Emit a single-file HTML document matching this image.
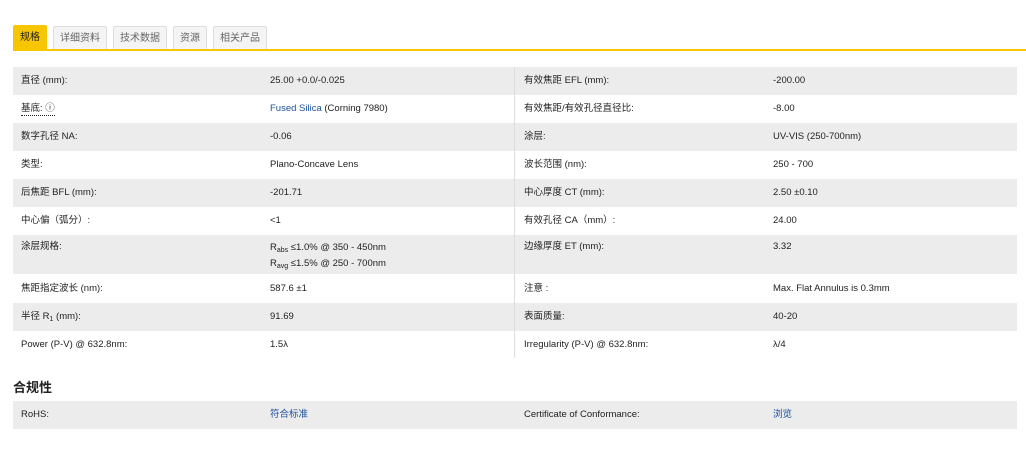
<!DOCTYPE html>
<html><head><meta charset="utf-8"><style>
body{margin:0;width:1026px;height:450px;background:#fff;font-family:"Liberation Sans","Noto Sans CJK SC",sans-serif;color:#222;font-size:9.5px;position:relative;overflow:hidden}
.tabs{position:absolute;left:13px;top:25px;height:25px}
.tab{position:absolute;top:1px;height:23px;border:1px solid #ddd;border-bottom:none;background:#f4f4f4;color:#666;font-size:10px;line-height:24px;text-align:center;border-radius:2px 2px 0 0;box-sizing:border-box}
.tab.a{background:#f7c600;border-color:#f7c600;color:#222;top:0;height:25px}
.line{position:absolute;left:13px;right:0;top:49px;height:2px;background:#f7c600}
.row{position:absolute;left:13px;width:1004px;height:28px}
.g{background:#ececec}
.c{position:absolute;top:0;line-height:28px;white-space:nowrap}
.l1{left:8px}.v1{left:257px}.l2{left:511px}.v2{left:760px}
.div{position:absolute;left:514px;top:67px;width:1px;height:291px;background:#ddd}
a{color:#1a4f9c;text-decoration:none}
sub{font-size:7px;vertical-align:-2px}
h3{position:absolute;left:13px;top:377px;margin:0;font-size:13px;font-weight:bold;color:#222}
</style></head><body>
<div class="tabs">
<div class="tab a" style="left:0;width:34px">规格</div>
<div class="tab" style="left:40px;width:54px">详细资料</div>
<div class="tab" style="left:100px;width:54px">技术数据</div>
<div class="tab" style="left:160px;width:34px">资源</div>
<div class="tab" style="left:200px;width:54px">相关产品</div>
</div>
<div class="line"></div>
<div class="row g" style="top:67px"><span class="c l1">直径 (mm):</span><span class="c v1">25.00 +0.0/-0.025</span><span class="c l2">有效焦距 EFL (mm):</span><span class="c v2">-200.00</span></div>
<div class="row" style="top:95px"><span class="c l1" style="border-bottom:1px dotted #222;line-height:13px;top:7px">基底: ⓘ</span><span class="c v1"><a>Fused Silica</a> (Corning 7980)</span><span class="c l2">有效焦距/有效孔径直径比:</span><span class="c v2">-8.00</span></div>
<div class="row g" style="top:123px"><span class="c l1">数字孔径 NA:</span><span class="c v1">-0.06</span><span class="c l2">涂层:</span><span class="c v2">UV-VIS (250-700nm)</span></div>
<div class="row" style="top:151px"><span class="c l1">类型:</span><span class="c v1">Plano-Concave Lens</span><span class="c l2">波长范围 (nm):</span><span class="c v2">250 - 700</span></div>
<div class="row g" style="top:179px"><span class="c l1">后焦距 BFL (mm):</span><span class="c v1">-201.71</span><span class="c l2">中心厚度 CT (mm):</span><span class="c v2">2.50 ±0.10</span></div>
<div class="row" style="top:207px"><span class="c l1">中心偏（弧分）:</span><span class="c v1">&lt;1</span><span class="c l2">有效孔径 CA（mm）:</span><span class="c v2">24.00</span></div>
<div class="row g" style="top:235px;height:39px"><span class="c l1" style="line-height:24px">涂层规格:</span><span class="c v1" style="line-height:13px;top:6px">R<sub>abs</sub> ≤1.0% @ 350 - 450nm<br>R<sub>avg</sub> ≤1.5% @ 250 - 700nm</span><span class="c l2" style="line-height:24px">边缘厚度 ET (mm):</span><span class="c v2" style="line-height:24px">3.32</span></div>
<div class="row" style="top:275px"><span class="c l1">焦距指定波长 (nm):</span><span class="c v1">587.6 ±1</span><span class="c l2">注意 :</span><span class="c v2">Max. Flat Annulus is 0.3mm</span></div>
<div class="row g" style="top:303px"><span class="c l1">半径 R<sub>1</sub> (mm):</span><span class="c v1">91.69</span><span class="c l2">表面质量:</span><span class="c v2">40-20</span></div>
<div class="row" style="top:331px"><span class="c l1">Power (P-V) @ 632.8nm:</span><span class="c v1">1.5λ</span><span class="c l2">Irregularity (P-V) @ 632.8nm:</span><span class="c v2">λ/4</span></div>
<div class="div"></div>
<h3>合规性</h3>
<div class="row g" style="top:401px"><span class="c l1">RoHS:</span><span class="c v1"><a>符合标准</a></span><span class="c l2">Certificate of Conformance:</span><span class="c v2"><a>浏览</a></span></div>
</body></html>
